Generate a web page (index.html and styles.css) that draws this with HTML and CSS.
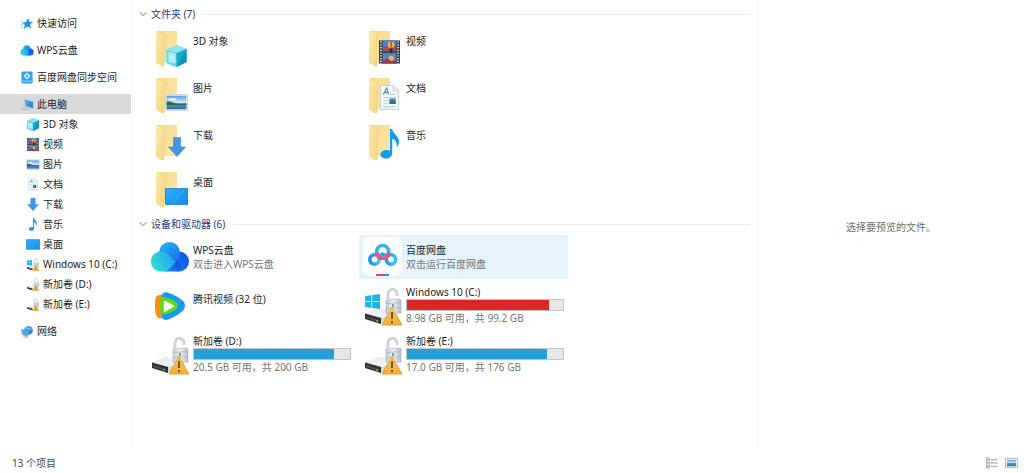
FILE: index.html
```html
<!DOCTYPE html>
<html lang="zh-CN">
<head>
    <meta charset="UTF-8">
    <title>此电脑</title>
    <link rel="stylesheet" href="styles.css">
</head>
<body>
    <!-- Shared icons -->
    <svg class="sprites" aria-hidden="true">
        <defs>
            <linearGradient id="gFlap" x1="0" y1="0" x2="1" y2="1"><stop offset="0" stop-color="#fdeaad"/><stop offset="1" stop-color="#f5d67f"/></linearGradient>
            <linearGradient id="gBack" x1="0" y1="0" x2="1" y2="1"><stop offset="0" stop-color="#f5d988"/><stop offset="1" stop-color="#fde9ad"/></linearGradient>
            <linearGradient id="gCloudTop" x1="0" y1="0" x2="1" y2="1"><stop offset="0" stop-color="#27b9f8"/><stop offset="1" stop-color="#1768f2"/></linearGradient>
            <linearGradient id="gCloudLeft" x1="0" y1="0.7" x2="1" y2="0.3"><stop offset="0" stop-color="#2fe0cf"/><stop offset="1" stop-color="#239ff8"/></linearGradient>
            <linearGradient id="gCloudRight" x1="0" y1="1" x2="1" y2="0"><stop offset="0" stop-color="#1a86f6"/><stop offset="1" stop-color="#0b4be0"/></linearGradient>
            <linearGradient id="gSky" x1="0" y1="0" x2="0" y2="1"><stop offset="0" stop-color="#5a9ae6"/><stop offset="0.5" stop-color="#d3e8f8"/><stop offset="0.6" stop-color="#477f6c"/><stop offset="0.75" stop-color="#4a86b2"/><stop offset="1" stop-color="#2c69a6"/></linearGradient>
            <linearGradient id="gDesk" x1="0" y1="0" x2="1" y2="1"><stop offset="0" stop-color="#2fb0fa"/><stop offset="1" stop-color="#128cee"/></linearGradient>
            <linearGradient id="gBlue" x1="0" y1="0" x2="1" y2="1"><stop offset="0" stop-color="#54b4f2"/><stop offset="1" stop-color="#1b78d0"/></linearGradient>
            <linearGradient id="gLock" x1="0" y1="0" x2="1" y2="0"><stop offset="0" stop-color="#c3ccd2"/><stop offset="0.5" stop-color="#edf2f5"/><stop offset="1" stop-color="#b3bfc7"/></linearGradient>
            <linearGradient id="gWarn" x1="0" y1="0" x2="0" y2="1"><stop offset="0" stop-color="#fccb5a"/><stop offset="1" stop-color="#f6ad38"/></linearGradient>
            <linearGradient id="gPan" x1="0" y1="0" x2="1" y2="0"><stop offset="0" stop-color="#1e90f5"/><stop offset="1" stop-color="#38c6f8"/></linearGradient>
        </defs>

        <symbol id="folder" viewBox="0 0 40 40">
            <path d="M7 3h20v31H14l-5 1z" fill="url(#gBack)"/>
            <path d="M6 3l8 5v30l-2 .5-6-4z" fill="url(#gFlap)"/>
            <path d="M14 8v30" stroke="#eccb74" stroke-width=".5"/>
        </symbol>
        <symbol id="cube" viewBox="0 0 22 22">
            <path d="M11 0l10 4v13l-10 5-10-4V5z" fill="#4fcfe3"/>
            <path d="M11 0l10 4-10 4L1 5z" fill="#8fe3ef"/>
            <path d="M1 5l10 3v14L1 18z" fill="#6cd9e9"/>
            <path d="M3 7l7 2v9l-7-1z" fill="#b4eff6"/>
            <path d="M11 8l10-4v13l-10 5z" fill="#1ba9cb"/>
            <path d="M21 4v13l-10 5z" fill="#0e93b8"/>
        </symbol>
        <symbol id="picture" viewBox="0 0 22 16">
            <rect x=".5" y=".5" width="21" height="15" fill="#fff" stroke="#cfd5da"/>
            <rect x="1.500" y="1.500" width="19" height="13" fill="url(#gSky)"/>
            <path d="M1.500 7c4-1 7 2 12 2.500l7-.5v1.500h-19z" fill="#31694c"/>
            <ellipse cx="7" cy="5" rx="4" ry="1" fill="#eef6fd"/>
        </symbol>
        <symbol id="film" viewBox="0 0 20 22">
            <rect width="20" height="22" fill="#3b3a3e"/>
            <rect x="3.500" width="13" height="22" fill="#4f82d8"/>
            <path d="M3.500 7l3.500-2 3 3 6.500-3v6h-13z" fill="#a84a52"/>
            <circle cx="11.500" cy="4" r="3" fill="#efc03c"/>
            <path d="M11.500 1v6" stroke="#d6452f" stroke-width="1.500"/>
            <path d="M3.500 10.500h13v1.300h-13z" fill="#2c3d28"/>
            <path d="M10 8h3l-1 5z" fill="#1e2734"/>
            <circle cx="11.500" cy="17" r="2.500" fill="#efb43c"/>
            <path d="M3.500 19l4.500-2 4 3 4.500-1v3h-13z" fill="#9e3949"/>
            <path d="M1.800 1v21M18.200 1v21" stroke="#e6e6e6" stroke-width="1.600" stroke-dasharray="1.300 1.300"/>
        </symbol>
        <symbol id="doc" viewBox="0 0 18 24">
            <path d="M.5.5h12l5 5v18H.5z" fill="#f8fbfd" stroke="#c9d1d7"/>
            <path d="M12.500.5v5h5" fill="#e5ecf1" stroke="#c9d1d7"/>
            <path d="M3 9l3.500-6L8 9M4 7h4" stroke="#3c9fb3" stroke-width="1.200" fill="none"/>
            <path d="M9.500 9H15M3 12h12M3 15h5M3 18h5M3 21h12" stroke="#b4cfdc"/>
            <rect x="9" y="13" width="6" height="5" fill="#3181c6"/>
            <path d="M9 16.500l3-1 3 1V18H9z" fill="#2f6b57"/>
        </symbol>
        <symbol id="down" viewBox="0 0 18 20">
            <path d="M5.500.5h7V10h5L9 19.500.5 10h5z" fill="#3f97e6" stroke="#2f85d4" stroke-width=".6"/>
        </symbol>
        <symbol id="note" viewBox="0 0 20 30">
            <path d="M10 0h2.200c.5 5 7.300 7 6.800 13.500-.2 2-1.200 3.500-2.500 5 1-5.500-1.500-8-4.300-8.500V24c0 3.500-3 5.500-6.200 5.500S.5 28 .5 25.500 3.500 21 7 21c1.200 0 2.200.2 3 .6z" fill="#169bf0"/>
        </symbol>
        <symbol id="desktop" viewBox="0 0 22 16">
            <rect x=".5" y=".5" width="21" height="15" fill="url(#gDesk)" stroke="#2687cf"/>
            <path d="M8 15c1-4 3-3 4-6s4-2 6-7" stroke="#45b4fa" fill="none" stroke-width=".8"/>
        </symbol>
        <symbol id="cloud" viewBox="0 0 40 32">
            <circle cx="29" cy="20.500" r="10" fill="url(#gCloudRight)"/>
            <circle cx="19.500" cy="11.500" r="10.500" fill="url(#gCloudTop)"/>
            <path d="M14 30.500h15a10 10 0 0 0 0-10c-4-2-6 0-8 2z" fill="url(#gCloudRight)"/>
            <path d="M10.500 30.500a10 10 0 1 1 7.500-17L26 21l-7 7c-2 2-4 2.500-6 2.500z" fill="url(#gCloudLeft)"/>
        </symbol>
        <symbol id="winlogo" viewBox="0 0 14 14">
            <path d="M0 2l6-1v5.700H0zM6.700.9L14 0v6.700H6.700zM0 7.400h6V13l-6-1zM6.700 7.400H14V14l-7.300-1z" fill="#1bb4f0"/>
        </symbol>
        <symbol id="drive" viewBox="0 0 40 40">
            <path d="M25 13V8.500c0-7 9-7 9 0V10" fill="none" stroke="#b4bcc1" stroke-width="2.600"/>
            <path d="M25 13V8.500c0-7 9-7 9 0V10" fill="none" stroke="#e8ecee" stroke-width="1"/>
            <path d="M2 28l13-6 18 4-8 9-8 3z" fill="#d3d6d9"/>
            <path d="M2 28l13-6 18 4-13 6z" fill="#eceeef"/>
            <path d="M2 27.500l16 4.500v6L2 33z" fill="#2d2f33"/>
            <path d="M3 30l13 4v2L3 32z" fill="#4c4f53"/>
            <circle cx="14" cy="35" r="1" fill="#37d04a"/>
            <path d="M23 14l13-1 2 1v13l-13 1-2-1z" fill="url(#gLock)" stroke="#a3afb7" stroke-width=".6"/>
            <path d="M23 17.500l14-.8M23 22.500l14-.8" stroke="#a3b3bd" stroke-width=".7"/>
            <path d="M30 18v3" stroke="#5d6e7a" stroke-width="1.400"/>
            <path d="M29 21.500l10 17.500H19z" fill="url(#gWarn)" stroke="#e3a035" stroke-width="1" stroke-linejoin="round"/>
            <path d="M29 26v7M29 35v2.200" stroke="#4a4230" stroke-width="1.600"/>
        </symbol>
        <symbol id="tencent" viewBox="0 0 40 40">
            <path d="M7.500 9.500C10 8.500 14 8 15 11v19c-1 2-4 3-6.500 2C6 31 5 26 5 20.500S5.500 10.500 7.500 9.500z" fill="#ff8b12"/>
            <path d="M12 9c.5-2.500 3-3.300 5.500-2.500 6 2 11 4.500 15.500 8.500 2.600 2.400 2.600 7 0 9.500-4 4-9.500 7-15 9-3 1-5.500 0-6-2.500z" fill="#169af5"/>
            <path d="M10.500 13c.5-2 2.500-2.300 4.300-1.800 4.500 1 9 3 12 5.500 1.800 1.600 1.800 4.200 0 5.800-3.200 2.800-7.500 4.800-12 5.800-2 .4-3.800-.3-4.300-2-.8-4-.8-9.300 0-13.300z" fill="#5fdc10"/>
            <path d="M14.500 15.500l9 4.500-9 5z" fill="#fff" stroke="#fff" stroke-width="1.500" stroke-linejoin="round"/>
        </symbol>
        <symbol id="baidu" viewBox="0 0 40 40">
            <rect width="39" height="39" rx="7" fill="#fff"/>
            <g fill="none" stroke-width="3.600">
                <circle cx="11.500" cy="22.500" r="4.700" stroke="url(#gPan)"/>
                <circle cx="28" cy="22.500" r="4.700" stroke="url(#gPan)"/>
                <path d="M15 19.500l4.500-2.500 5 2.500" stroke="#2aa7f7"/>
                <circle cx="19.700" cy="14.500" r="6" stroke="#38aef7"/>
                <path d="M13.700 15.500a6 6 0 0 0 12 0" stroke="#ee5578"/>
            </g>
            <path d="M13 37h7v2h-7z" fill="#ef4469"/>
            <path d="M20 37h6v2h-6z" fill="#3f86f2"/>
        </symbol>
        <symbol id="star" viewBox="0 0 14 14">
            <path d="M8.500 1l.8 4 4.200.5L10.300 8l1 4.500L7.500 10.200 3.800 13l.9-4.500L1.500 6.300l4-.6z" fill="#2593dc"/>
            <path d="M.5 5h2M0 8.500h3M1 11.500h2" stroke="#7cc3ee"/>
        </symbol>
        <symbol id="sync" viewBox="0 0 14 14">
            <rect x="1" y=".5" width="12" height="13" rx="1.500" fill="#2fa2f2"/>
            <path d="M1.500 11h11" stroke="#a6dbfb"/>
            <path d="M7 2.800L9.700 5.500 7 8.200 4.300 5.500z" fill="none" stroke="#fff" stroke-width="1.300"/>
        </symbol>
        <symbol id="pc" viewBox="0 0 14 14">
            <path d="M4.500 2l9 2v7L5.500 8.500z" fill="url(#gBlue)" stroke="#8fa7b5" stroke-width=".6"/>
            <path d="M1 11.500l4-2 7 2-1 1.500H3z" fill="#c3ccd2"/>
            <path d="M2 11.500l6 1.500" stroke="#a0abb5" stroke-width=".7"/>
        </symbol>
        <symbol id="network" viewBox="0 0 14 14">
            <circle cx="8.500" cy="5.800" r="4.800" fill="url(#gBlue)"/>
            <path d="M5 3c3 0 4 2 7 1.500" stroke="#b5e1f8" stroke-width=".8" fill="none"/>
            <path d="M1 4.500l7 2v6L2 10.500z" fill="#4aa5e6" stroke="#8ba9bd" stroke-width=".7"/>
            <path d="M3 12.500l5 1" stroke="#99a8b2"/>
        </symbol>
        <symbol id="chevron" viewBox="0 0 8 8">
            <path d="M.7 2.200L4 5.700l3.300-3.500" fill="none" stroke="#6f7680"/>
        </symbol>
    </svg>

    <div class="explorer">
        <nav class="sidebar">
            <a class="nav-item" href="#"><svg><use href="#star"/></svg>快速访问</a>
            <a class="nav-item" href="#"><svg><use href="#cloud"/></svg>WPS云盘</a>
            <a class="nav-item" href="#"><svg><use href="#sync"/></svg>百度网盘同步空间</a>
            <a class="nav-item active" href="#"><svg><use href="#pc"/></svg>此电脑</a>
            <div class="nav-children">
                <a class="nav-item" href="#"><svg><use href="#cube"/></svg>3D 对象</a>
                <a class="nav-item" href="#"><svg><use href="#film"/></svg>视频</a>
                <a class="nav-item" href="#"><svg><use href="#picture"/></svg>图片</a>
                <a class="nav-item" href="#"><svg><use href="#doc"/></svg>文档</a>
                <a class="nav-item" href="#"><svg><use href="#down"/></svg>下载</a>
                <a class="nav-item" href="#"><svg><use href="#note"/></svg>音乐</a>
                <a class="nav-item" href="#"><svg><use href="#desktop"/></svg>桌面</a>
                <a class="nav-item" href="#"><svg viewBox="0 0 40 40"><use href="#drive"/><use href="#winlogo" x="0" y="6" width="18" height="18"/></svg>Windows 10 (C:)</a>
                <a class="nav-item" href="#"><svg><use href="#drive"/></svg>新加卷 (D:)</a>
                <a class="nav-item" href="#"><svg><use href="#drive"/></svg>新加卷 (E:)</a>
            </div>
            <a class="nav-item" href="#"><svg><use href="#network"/></svg>网络</a>
        </nav>

        <main class="content">
            <section>
                <button class="group-title" type="button"><svg><use href="#chevron"/></svg>文件夹 (7)</button>
                <div class="tiles folders">
                    <a class="tile" href="#">
                        <svg viewBox="0 0 40 40"><use href="#folder" width="40" height="40"/><use href="#cube" x="15" y="17" width="23" height="22"/></svg>
                        <span class="info"><span class="name">3D 对象</span></span>
                    </a>
                    <a class="tile" href="#">
                        <svg viewBox="0 0 40 40"><use href="#folder" width="40" height="40"/><use href="#film" x="16" y="12" width="21" height="24"/></svg>
                        <span class="info"><span class="name">视频</span></span>
                    </a>
                    <a class="tile" href="#">
                        <svg viewBox="0 0 40 40"><use href="#folder" width="40" height="40"/><use href="#picture" x="15" y="19" width="23" height="17"/></svg>
                        <span class="info"><span class="name">图片</span></span>
                    </a>
                    <a class="tile" href="#">
                        <svg viewBox="0 0 40 40"><use href="#folder" width="40" height="40"/><use href="#doc" x="17" y="10" width="19" height="25"/></svg>
                        <span class="info"><span class="name">文档</span></span>
                    </a>
                    <a class="tile" href="#">
                        <svg viewBox="0 0 40 40"><use href="#folder" width="40" height="40"/><use href="#down" x="18" y="15" width="18" height="20"/></svg>
                        <span class="info"><span class="name">下载</span></span>
                    </a>
                    <a class="tile" href="#">
                        <svg viewBox="0 0 40 40"><use href="#folder" width="40" height="40"/><use href="#note" x="17" y="7" width="20" height="30"/></svg>
                        <span class="info"><span class="name">音乐</span></span>
                    </a>
                    <a class="tile" href="#">
                        <svg viewBox="0 0 40 40"><use href="#folder" width="40" height="40"/><use href="#desktop" x="15" y="19" width="23" height="17"/></svg>
                        <span class="info"><span class="name">桌面</span></span>
                    </a>
                </div>
            </section>

            <section>
                <button class="group-title" type="button"><svg><use href="#chevron"/></svg>设备和驱动器 (6)</button>
                <div class="tiles devices">
                    <a class="tile" href="#">
                        <svg><use href="#cloud"/></svg>
                        <span class="info"><span class="name">WPS云盘</span><span class="detail">双击进入WPS云盘</span></span>
                    </a>
                    <a class="tile hover" href="#">
                        <svg><use href="#baidu"/></svg>
                        <span class="info"><span class="name">百度网盘</span><span class="detail">双击运行百度网盘</span></span>
                    </a>
                    <a class="tile" href="#">
                        <svg><use href="#tencent"/></svg>
                        <span class="info"><span class="name">腾讯视频 (32 位)</span></span>
                    </a>
                    <a class="tile disk" href="#">
                        <svg viewBox="0 0 40 40"><use href="#drive" width="40" height="40"/><use href="#winlogo" x="2" y="8" width="15" height="15"/></svg>
                        <span class="info"><span class="name">Windows 10 (C:)</span><span class="bar"><span class="used full" style="width: 91%"></span></span><span class="detail">8.98 GB 可用，共 99.2 GB</span></span>
                    </a>
                    <a class="tile disk" href="#">
                        <svg><use href="#drive"/></svg>
                        <span class="info"><span class="name">新加卷 (D:)</span><span class="bar"><span class="used" style="width: 90%"></span></span><span class="detail">20.5 GB 可用，共 200 GB</span></span>
                    </a>
                    <a class="tile disk" href="#">
                        <svg><use href="#drive"/></svg>
                        <span class="info"><span class="name">新加卷 (E:)</span><span class="bar"><span class="used" style="width: 90%"></span></span><span class="detail">17.0 GB 可用，共 176 GB</span></span>
                    </a>
                </div>
            </section>
        </main>

        <aside class="preview">选择要预览的文件。</aside>
    </div>

    <footer class="status">
        <span>13 个项目</span>
        <div class="views">
            <button type="button" aria-label="详细信息">
                <svg viewBox="0 0 14 12"><path d="M.5.5h3v11h-3z" fill="#eee" stroke="#aaa"/><path d="M1.500 2.500h1M1.500 6h1M1.500 9.500h1" stroke="#555"/><path d="M5 2.500h8M5 6h8M5 9.500h8" stroke="#8a8a8a" stroke-dasharray="3.500 .5"/></svg>
            </button>
            <button type="button" aria-label="大图标">
                <svg viewBox="0 0 14 12"><path d="M.5 1h13v10H.5z" fill="#fff" stroke="#9db4c2"/><path d="M2 2.500h10v7H2z" fill="url(#gSky)"/></svg>
            </button>
        </div>
    </footer>
</body>
</html>
```

FILE: styles.css
```css
* {
    box-sizing: border-box;
}
body {
    display: flex;
    flex-direction: column;
    min-height: 100vh;
    margin: 0;
    background-color: #fff;
    color: #1c1c1c;
    font-family: "Noto Sans", "Noto Sans CJK SC", sans-serif;
    font-size: 10px;
    line-height: 14px;
}
a {
    color: inherit;
    text-decoration: none;
}
button {
    padding: 0;
    border: 0;
    background: none;
    font: inherit;
}
.sprites {
    display: block;
    width: 0;
    height: 0;
}
.explorer {
    display: flex;
    flex: 1;
}

/* Navigation pane */
.sidebar {
    flex: 0 0 133px;
    display: flex;
    flex-direction: column;
    gap: 7px;
    padding: 13px 1px 0 0;
    border-right: 1px solid #f6f6f6;
}
.nav-item {
    display: flex;
    align-items: center;
    gap: 3px;
    height: 20px;
    padding-left: 20px;
    white-space: nowrap;
}
.nav-item svg {
    flex: none;
    width: 14px;
    height: 13px;
}
.nav-item.active {
    background-color: #d9d9d9;
}
.nav-children {
    margin-top: -7px;
}
.nav-children .nav-item {
    padding-left: 26px;
}

/* Folder and drive tiles */
.content {
    flex: 1;
    padding: 7px 7px 0 6px;
}
.group-title {
    display: flex;
    align-items: center;
    gap: 4px;
    width: 100%;
    color: #2b3a80;
    white-space: nowrap;
}
.group-title svg {
    width: 8px;
    height: 8px;
}
.group-title::after {
    content: "";
    flex: 1;
    margin-left: 3px;
    border-top: 1px solid #ebebeb;
}
.tiles {
    display: grid;
    grid-template-columns: 209px 209px;
    grid-auto-rows: 44px;
    column-gap: 4px;
    padding-left: 7px;
}
.folders {
    row-gap: 3px;
    padding-top: 5px;
    padding-bottom: 6px;
}
.devices {
    row-gap: 5px;
    padding-top: 4px;
}
.tile {
    display: flex;
    gap: 3px;
    padding: 2px 4px;
}
.tile > svg {
    flex: none;
    width: 40px;
    height: 40px;
}
.tile.hover {
    background-color: #e5f3fd;
}
.info {
    display: flex;
    flex: 1;
    flex-direction: column;
    padding-top: 6px;
    white-space: nowrap;
}
.disk .info {
    padding-top: 0;
}
.disk .name {
    line-height: 13px;
}
.detail {
    color: #757575;
}
.bar {
    height: 12px;
    border: 1px solid #c4c4c4;
    background-color: #e6e6e6;
}
.used {
    display: block;
    height: 100%;
    background-color: #26a0da;
}
.used.full {
    background-color: #da2626;
}

/* Preview pane */
.preview {
    flex: 0 0 267px;
    display: flex;
    align-items: center;
    justify-content: center;
    padding-top: 6px;
    border-left: 1px solid #f6f6f6;
    color: #6d6d6d;
}

.status {
    display: flex;
    align-items: center;
    justify-content: space-between;
    height: 25px;
    padding: 4px 6px 0 12px;
    color: #3c4a58;
}
.views {
    display: flex;
    gap: 6px;
}
.views svg {
    display: block;
    width: 13px;
    height: 12px;
}
```
